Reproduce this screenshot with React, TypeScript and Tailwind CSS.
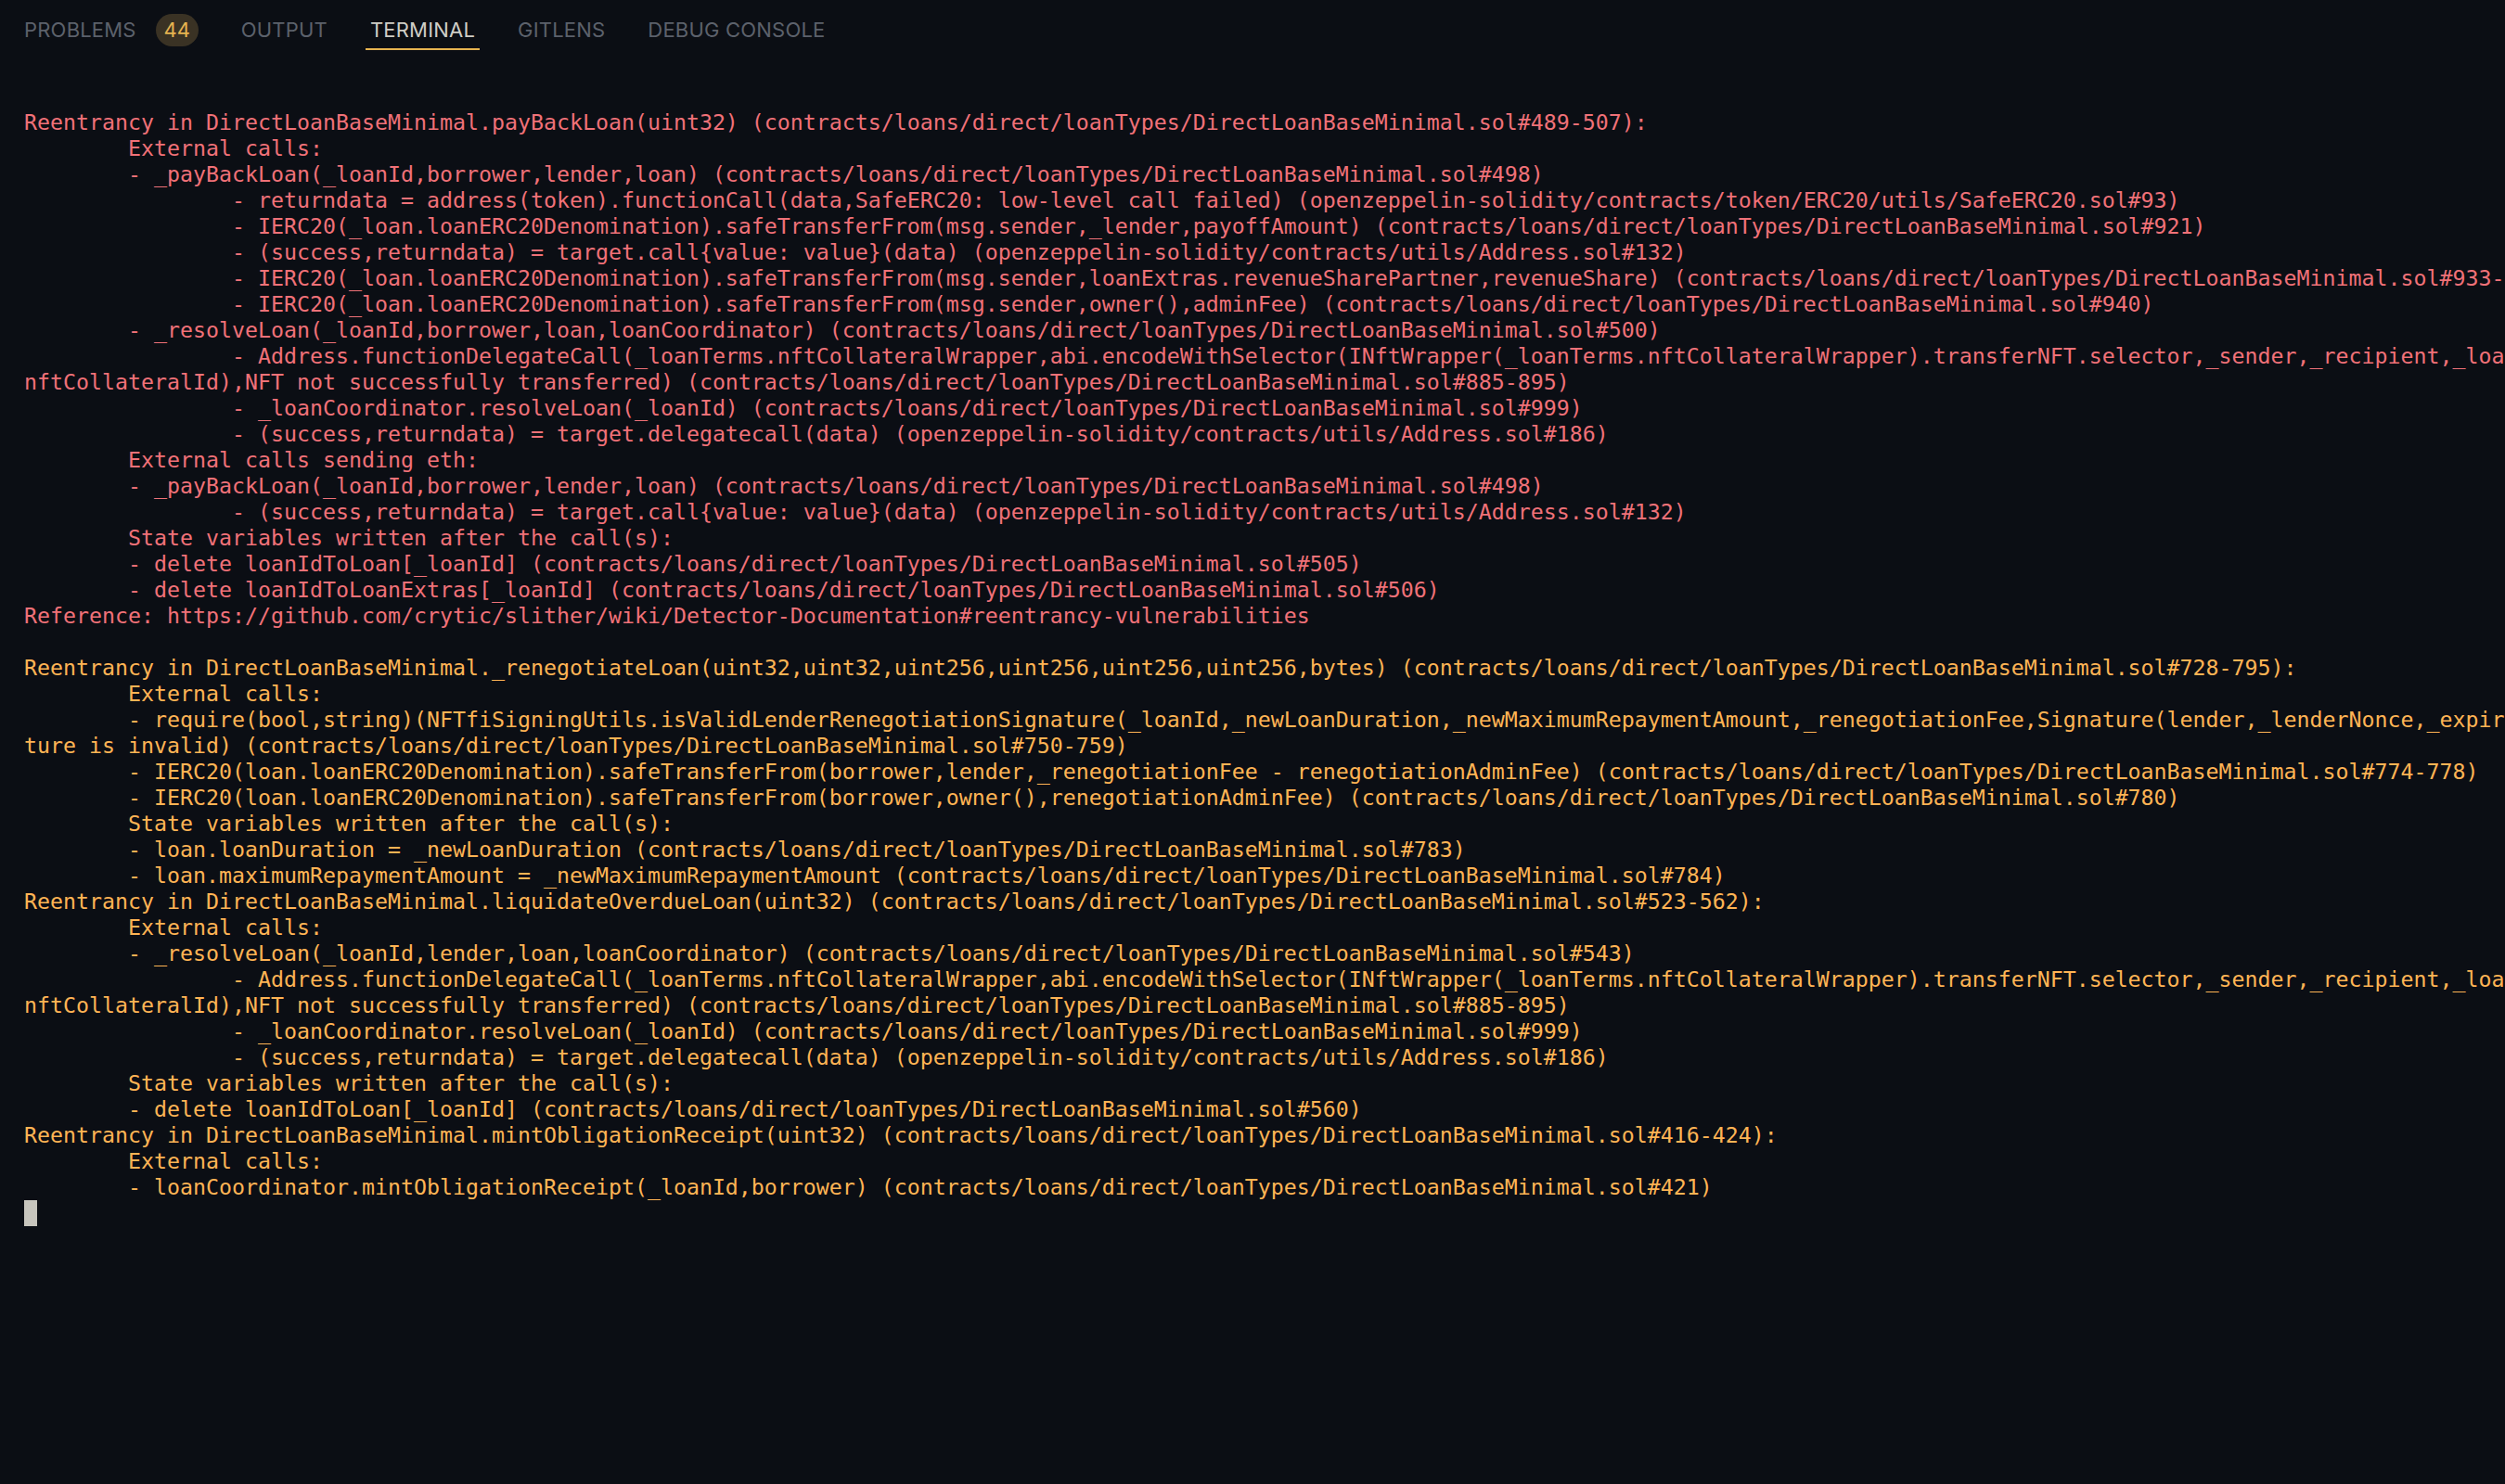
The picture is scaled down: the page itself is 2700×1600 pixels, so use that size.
import React from "react";

const T = "        ";
const TT = T + T;

type Line = { text: string; color: "red" | "yellow" };

const redLines: string[] = [
  "Reentrancy in DirectLoanBaseMinimal.payBackLoan(uint32) (contracts/loans/direct/loanTypes/DirectLoanBaseMinimal.sol#489-507):",
  T + "External calls:",
  T + "- _payBackLoan(_loanId,borrower,lender,loan) (contracts/loans/direct/loanTypes/DirectLoanBaseMinimal.sol#498)",
  TT + "- returndata = address(token).functionCall(data,SafeERC20: low-level call failed) (openzeppelin-solidity/contracts/token/ERC20/utils/SafeERC20.sol#93)",
  TT + "- IERC20(_loan.loanERC20Denomination).safeTransferFrom(msg.sender,_lender,payoffAmount) (contracts/loans/direct/loanTypes/DirectLoanBaseMinimal.sol#921)",
  TT + "- (success,returndata) = target.call{value: value}(data) (openzeppelin-solidity/contracts/utils/Address.sol#132)",
  TT + "- IERC20(_loan.loanERC20Denomination).safeTransferFrom(msg.sender,loanExtras.revenueSharePartner,revenueShare) (contracts/loans/direct/loanTypes/DirectLoanBaseMinimal.sol#933-937)",
  TT + "- IERC20(_loan.loanERC20Denomination).safeTransferFrom(msg.sender,owner(),adminFee) (contracts/loans/direct/loanTypes/DirectLoanBaseMinimal.sol#940)",
  T + "- _resolveLoan(_loanId,borrower,loan,loanCoordinator) (contracts/loans/direct/loanTypes/DirectLoanBaseMinimal.sol#500)",
  TT + "- Address.functionDelegateCall(_loanTerms.nftCollateralWrapper,abi.encodeWithSelector(INftWrapper(_loanTerms.nftCollateralWrapper).transferNFT.selector,_sender,_recipient,_loanTerms.",
  "nftCollateralId),NFT not successfully transferred) (contracts/loans/direct/loanTypes/DirectLoanBaseMinimal.sol#885-895)",
  TT + "- _loanCoordinator.resolveLoan(_loanId) (contracts/loans/direct/loanTypes/DirectLoanBaseMinimal.sol#999)",
  TT + "- (success,returndata) = target.delegatecall(data) (openzeppelin-solidity/contracts/utils/Address.sol#186)",
  T + "External calls sending eth:",
  T + "- _payBackLoan(_loanId,borrower,lender,loan) (contracts/loans/direct/loanTypes/DirectLoanBaseMinimal.sol#498)",
  TT + "- (success,returndata) = target.call{value: value}(data) (openzeppelin-solidity/contracts/utils/Address.sol#132)",
  T + "State variables written after the call(s):",
  T + "- delete loanIdToLoan[_loanId] (contracts/loans/direct/loanTypes/DirectLoanBaseMinimal.sol#505)",
  T + "- delete loanIdToLoanExtras[_loanId] (contracts/loans/direct/loanTypes/DirectLoanBaseMinimal.sol#506)",
  "Reference: https://github.com/crytic/slither/wiki/Detector-Documentation#reentrancy-vulnerabilities",
  "",
];

const yellowLines: string[] = [
  "Reentrancy in DirectLoanBaseMinimal._renegotiateLoan(uint32,uint32,uint256,uint256,uint256,uint256,bytes) (contracts/loans/direct/loanTypes/DirectLoanBaseMinimal.sol#728-795):",
  T + "External calls:",
  T + "- require(bool,string)(NFTfiSigningUtils.isValidLenderRenegotiationSignature(_loanId,_newLoanDuration,_newMaximumRepaymentAmount,_renegotiationFee,Signature(lender,_lenderNonce,_expiry,_lenderSignature),Renegotiation signa",
  "ture is invalid) (contracts/loans/direct/loanTypes/DirectLoanBaseMinimal.sol#750-759)",
  T + "- IERC20(loan.loanERC20Denomination).safeTransferFrom(borrower,lender,_renegotiationFee - renegotiationAdminFee) (contracts/loans/direct/loanTypes/DirectLoanBaseMinimal.sol#774-778)",
  T + "- IERC20(loan.loanERC20Denomination).safeTransferFrom(borrower,owner(),renegotiationAdminFee) (contracts/loans/direct/loanTypes/DirectLoanBaseMinimal.sol#780)",
  T + "State variables written after the call(s):",
  T + "- loan.loanDuration = _newLoanDuration (contracts/loans/direct/loanTypes/DirectLoanBaseMinimal.sol#783)",
  T + "- loan.maximumRepaymentAmount = _newMaximumRepaymentAmount (contracts/loans/direct/loanTypes/DirectLoanBaseMinimal.sol#784)",
  "Reentrancy in DirectLoanBaseMinimal.liquidateOverdueLoan(uint32) (contracts/loans/direct/loanTypes/DirectLoanBaseMinimal.sol#523-562):",
  T + "External calls:",
  T + "- _resolveLoan(_loanId,lender,loan,loanCoordinator) (contracts/loans/direct/loanTypes/DirectLoanBaseMinimal.sol#543)",
  TT + "- Address.functionDelegateCall(_loanTerms.nftCollateralWrapper,abi.encodeWithSelector(INftWrapper(_loanTerms.nftCollateralWrapper).transferNFT.selector,_sender,_recipient,_loanTerms.",
  "nftCollateralId),NFT not successfully transferred) (contracts/loans/direct/loanTypes/DirectLoanBaseMinimal.sol#885-895)",
  TT + "- _loanCoordinator.resolveLoan(_loanId) (contracts/loans/direct/loanTypes/DirectLoanBaseMinimal.sol#999)",
  TT + "- (success,returndata) = target.delegatecall(data) (openzeppelin-solidity/contracts/utils/Address.sol#186)",
  T + "State variables written after the call(s):",
  T + "- delete loanIdToLoan[_loanId] (contracts/loans/direct/loanTypes/DirectLoanBaseMinimal.sol#560)",
  "Reentrancy in DirectLoanBaseMinimal.mintObligationReceipt(uint32) (contracts/loans/direct/loanTypes/DirectLoanBaseMinimal.sol#416-424):",
  T + "External calls:",
  T + "- loanCoordinator.mintObligationReceipt(_loanId,borrower) (contracts/loans/direct/loanTypes/DirectLoanBaseMinimal.sol#421)",
];

const lines: Line[] = [
  ...redLines.map((t) => ({ text: t, color: "red" as const })),
  ...yellowLines.map((t) => ({ text: t, color: "yellow" as const })),
];

function Tab({ label, active, badge }: { label: string; active?: boolean; badge?: string }) {
  return (
    <div
      className={
        "flex items-center h-[42px] px-[5px] border-b-2 " +
        (active ? "border-[#e6b450] text-[#cfcdc6]" : "border-transparent text-[#5c616b]")
      }
    >
      <span className="text-[22px] leading-none tracking-[0.2px]">{label}</span>
      {badge && (
        <span className="ml-[21px] flex items-center justify-center w-[46px] h-[35px] rounded-full bg-[#3a3224] text-[#e6b450] text-[22px] leading-none">
          {badge}
        </span>
      )}
    </div>
  );
}

export default function App() {
  return (
    <div className="w-[2700px] h-[1600px] bg-[#0b0e14] overflow-hidden flex flex-col">
      <div
        className="flex items-end h-[54px] pl-[21px] gap-[36px]"
        style={{ fontFamily: "Inter, 'Noto Sans', sans-serif" }}
      >
        <Tab label="PROBLEMS" badge="44" />
        <Tab label="OUTPUT" />
        <Tab label="TERMINAL" active />
        <Tab label="GITLENS" />
        <Tab label="DEBUG CONSOLE" />
      </div>
      <div
        className="pt-[64px] pl-[26px] text-[23.25px] leading-[28px]"
        style={{ fontFamily: "'DejaVu Sans Mono', 'Liberation Mono', monospace" }}
      >
        {lines.map((l, i) => (
          <div
            key={i}
            className={
              "h-[28px] whitespace-pre overflow-hidden " +
              (l.color === "red" ? "text-[#f07178]" : "text-[#ffb454]")
            }
          >
            {l.text}
          </div>
        ))}
        <div className="h-[28px] flex items-start">
          <div className="w-[14px] h-[28px] bg-[#c7c5bd]" />
        </div>
      </div>
    </div>
  );
}
